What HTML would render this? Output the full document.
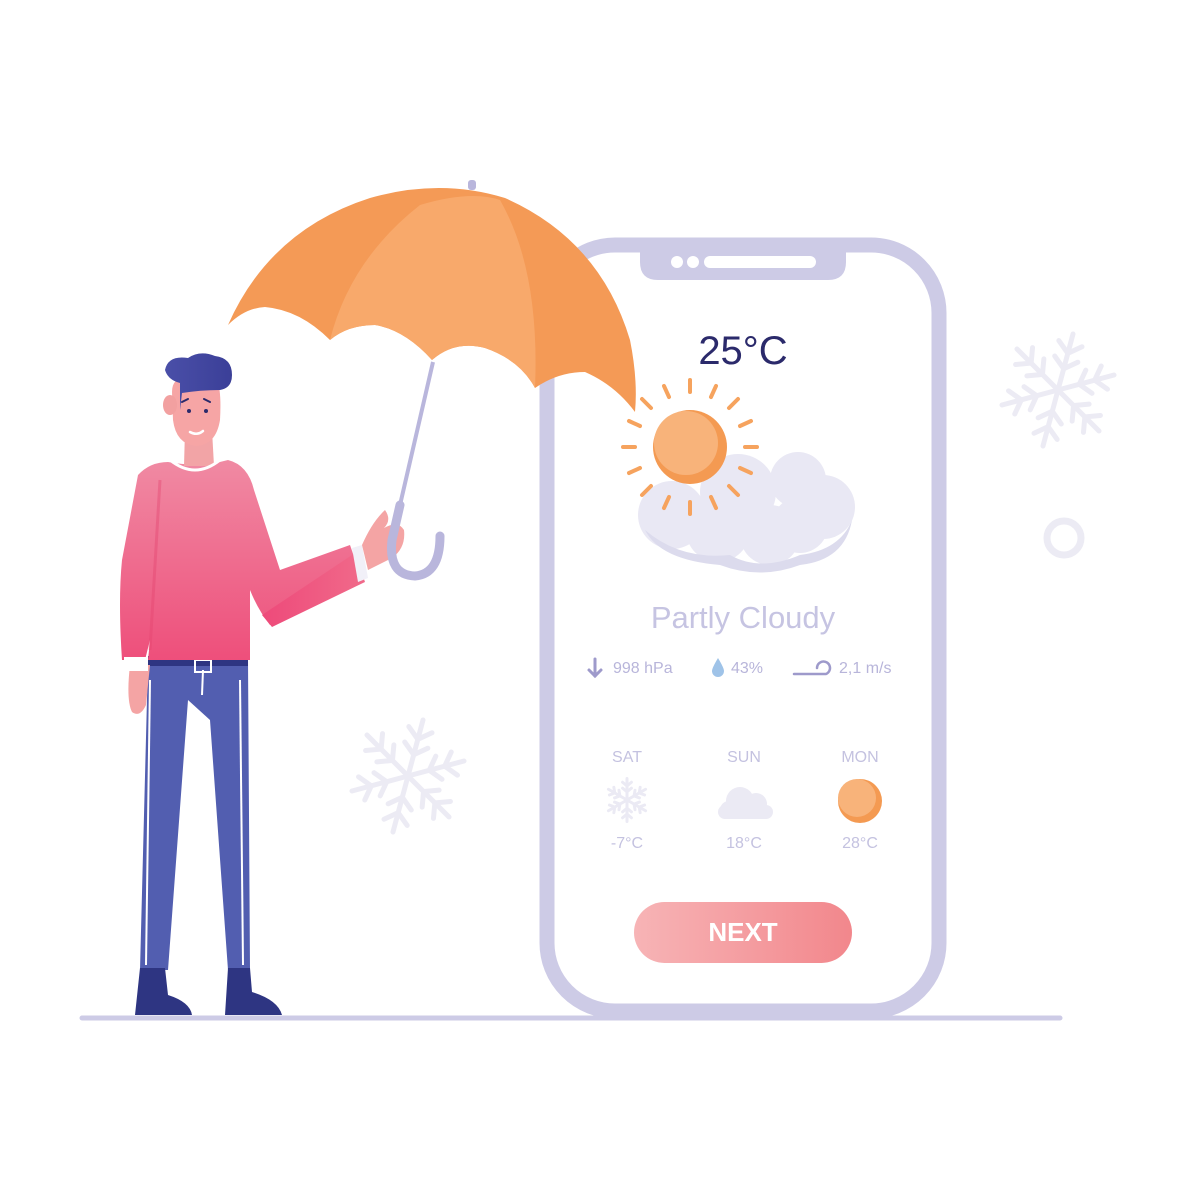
<!DOCTYPE html>
<html><head><meta charset="utf-8"><style>
html,body{margin:0;padding:0;background:#fff;width:1200px;height:1200px;overflow:hidden}
svg{display:block}
text{font-family:"Liberation Sans",sans-serif}
</style></head><body>
<svg width="1200" height="1200" viewBox="0 0 1200 1200">
<defs>
<linearGradient id="sw" x1="0" y1="0" x2="0" y2="1"><stop offset="0" stop-color="#f08aa3"/><stop offset="1" stop-color="#ee4f7b"/></linearGradient>
<linearGradient id="arm" x1="0" y1="0" x2="1" y2="0"><stop offset="0" stop-color="#ee4a7a"/><stop offset="1" stop-color="#f06a8a"/></linearGradient>
<linearGradient id="btn" x1="0" y1="0" x2="1" y2="0"><stop offset="0" stop-color="#f7b4b6"/><stop offset="1" stop-color="#f2878c"/></linearGradient>
<linearGradient id="hair" x1="0" y1="0" x2="1" y2="0"><stop offset="0" stop-color="#4a4fa8"/><stop offset="1" stop-color="#3b3f98"/></linearGradient>
<g id="flake" fill="none" stroke-linecap="round">
<g id="arm1"><line x1="0" y1="0" x2="0" y2="-58"/><polyline points="-12,-32 0,-22 12,-32"/><polyline points="-12,-48 0,-38 12,-48"/></g>
<use href="#arm1" transform="rotate(60)"/><use href="#arm1" transform="rotate(120)"/><use href="#arm1" transform="rotate(180)"/><use href="#arm1" transform="rotate(240)"/><use href="#arm1" transform="rotate(300)"/>
</g>
</defs>

<line x1="82" y1="1018" x2="1060" y2="1018" stroke="#cdcbe6" stroke-width="5" stroke-linecap="round"/>

<g transform="translate(1058,390) rotate(15)" stroke="#ecebf4" stroke-width="5"><use href="#flake"/></g>
<g transform="translate(408,776) rotate(15)" stroke="#ecebf4" stroke-width="5"><use href="#flake"/></g>
<circle cx="1064" cy="538" r="17" fill="none" stroke="#ecebf4" stroke-width="7"/>

<rect x="547" y="245" width="392" height="766" rx="68" fill="#fff" stroke="#cdcbe6" stroke-width="15"/>
<path d="M640 246 H846 V262 Q846 280 828 280 H658 Q640 280 640 262 Z" fill="#cdcbe6"/>
<circle cx="677" cy="262" r="6" fill="#fff"/><circle cx="693" cy="262" r="6" fill="#fff"/>
<rect x="704" y="256" width="112" height="12" rx="6" fill="#fff"/>

<text x="743" y="364" text-anchor="middle" font-size="40" fill="#2b2a6b">25°C</text>

<!-- cloud -->
<g fill="#e9e8f4">
<circle cx="672" cy="515" r="34"/><circle cx="738" cy="492" r="38"/><circle cx="798" cy="480" r="28"/><circle cx="823" cy="507" r="32"/><circle cx="718" cy="530" r="32"/><circle cx="770" cy="535" r="30"/><circle cx="800" cy="525" r="28"/>
</g>
<path d="M645 530 Q680 560 730 555 Q760 572 800 555 Q840 550 852 520 Q845 560 800 565 Q760 580 720 565 Q660 560 645 530Z" fill="#dcdbed"/>
<!-- sun -->
<g stroke="#f6a35e" stroke-width="4" stroke-linecap="round">
<line x1="690" y1="392" x2="690" y2="380"/><line x1="690" y1="502" x2="690" y2="514"/>
<line x1="635" y1="447" x2="623" y2="447"/><line x1="745" y1="447" x2="757" y2="447"/>
<line x1="651" y1="408" x2="642" y2="399"/><line x1="729" y1="408" x2="738" y2="399"/>
<line x1="651" y1="486" x2="642" y2="495"/><line x1="729" y1="486" x2="738" y2="495"/>
<line x1="669" y1="397" x2="664" y2="386"/><line x1="711" y1="397" x2="716" y2="386"/>
<line x1="669" y1="497" x2="664" y2="508"/><line x1="711" y1="497" x2="716" y2="508"/>
<line x1="640" y1="426" x2="629" y2="421"/><line x1="740" y1="426" x2="751" y2="421"/>
<line x1="640" y1="468" x2="629" y2="473"/><line x1="740" y1="468" x2="751" y2="473"/>
</g>
<circle cx="690" cy="447" r="37" fill="#f49a52"/>
<circle cx="686" cy="443" r="32" fill="#f8b37a"/>

<text x="743" y="628" text-anchor="middle" font-size="31" fill="#c6c4e2">Partly Cloudy</text>

<g stroke="#9e9acb" stroke-width="3" fill="none" stroke-linecap="round"><line x1="595" y1="659" x2="595" y2="676"/><polyline points="589,670 595,676 601,670"/></g>
<text x="613" y="673" font-size="16" fill="#b8b5da">998 hPa</text>
<path d="M718 658 Q712 668 712 671 A6 6 0 0 0 724 671 Q724 668 718 658Z" fill="#9fc3e8"/>
<text x="731" y="673" font-size="16" fill="#b8b5da">43%</text>
<path d="M794 674 H826 A6.5 6.5 0 1 0 817 668" fill="none" stroke="#9e9acb" stroke-width="2.5" stroke-linecap="round"/>
<text x="839" y="673" font-size="16" fill="#b8b5da">2,1 m/s</text>

<g font-size="16" fill="#c4c2e0" text-anchor="middle">
<text x="627" y="762">SAT</text><text x="744" y="762">SUN</text><text x="860" y="762">MON</text>
<text x="627" y="848">-7°C</text><text x="744" y="848">18°C</text><text x="860" y="848">28°C</text>
</g>
<g transform="translate(627,800) scale(0.37)" stroke="#ebeaf4" stroke-width="8"><use href="#flake"/></g>
<g fill="#ebeaf4"><circle cx="740" cy="801" r="14"/><circle cx="756" cy="804" r="11"/><circle cx="729" cy="810" r="9"/><rect x="718" y="805" width="55" height="14" rx="7"/></g>
<circle cx="860" cy="801" r="22" fill="#f49a52"/><circle cx="857" cy="798" r="19" fill="#f8b37a"/>

<rect x="634" y="902" width="218" height="61" rx="30.5" fill="url(#btn)"/>
<text x="743" y="941" text-anchor="middle" font-size="26" font-weight="bold" fill="#fff">NEXT</text>

<!-- umbrella -->
<path d="M228 325 Q270 230 370 198 Q440 178 505 198 Q600 240 630 340 Q638 380 635 412 Q615 385 585 372 Q558 372 535 388 Q520 360 485 348 Q455 340 432 360 Q405 330 375 325 Q348 325 330 340 Q300 310 265 307 Q245 308 228 325Z" fill="#f49a56"/>
<path d="M330 340 Q350 260 420 205 Q470 190 500 200 Q540 270 535 388 Q520 360 485 348 Q455 340 432 360 Q405 330 375 325 Q348 325 330 340Z" fill="#f8a96b"/>
<rect x="468" y="180" width="8" height="10" rx="3" fill="#b9b6dc"/>
<path d="M433 362 L400 505" stroke="#b9b6dc" stroke-width="4" fill="none"/>

<!-- man -->
<path d="M148 660 L248 660 L250 970 L228 970 L210 720 L188 700 L168 970 L140 970 Z" fill="#525eb0"/>
<line x1="150" y1="680" x2="146" y2="965" stroke="#fff" stroke-width="2"/>
<line x1="240" y1="680" x2="243" y2="965" stroke="#fff" stroke-width="2"/>
<line x1="203" y1="670" x2="202" y2="695" stroke="#fff" stroke-width="2"/>
<rect x="148" y="656" width="100" height="10" fill="#2e3582"/>
<rect x="195" y="660" width="16" height="12" fill="none" stroke="#fff" stroke-width="2"/>
<path d="M140 968 L165 968 L168 995 Q190 1002 192 1015 L135 1015 Z" fill="#2e3582"/>
<path d="M228 968 L250 968 L252 992 Q278 1000 282 1015 L225 1015 Z" fill="#2e3582"/>
<path d="M130 665 Q126 700 132 712 Q140 718 146 705 L150 665Z" fill="#f4a4a4"/>
<path d="M168 462 Q200 468 228 460 Q248 465 254 490 L280 570 L350 545 L362 580 L270 625 Q258 610 250 590 L250 660 L148 660 L150 640 L145 660 L122 660 Q118 600 122 560 L138 475 Q150 462 168 462Z" fill="url(#sw)"/>
<path d="M160 480 L150 650" stroke="#e4446f" stroke-width="3" fill="none" opacity=".4"/>
<path d="M262 615 L355 553 L365 582 L272 627Z" fill="url(#arm)"/>
<rect x="124" y="657" width="24" height="14" fill="#fff"/>
<path d="M352 548 L362 545 L368 578 L358 582Z" fill="#f1f0f8"/>
<path d="M362 545 Q372 522 385 510 Q392 520 384 528 Q398 520 404 530 Q406 548 392 558 L368 570Z" fill="#f4a4a4"/>
<path d="M400 505 L392 540 Q388 575 415 576 Q440 574 440 536" stroke="#b9b6dc" stroke-width="9" fill="none" stroke-linecap="round"/>
<path d="M185 430 L212 430 L214 466 L184 466Z" fill="#f2a4a6"/>
<path d="M170 460 Q195 480 220 460" stroke="#fff" stroke-width="3" fill="none"/>
<path d="M172 392 Q172 380 182 378 L215 378 Q222 385 220 420 Q216 445 196 446 Q176 444 173 420Z" fill="#f6a5a5"/>
<ellipse cx="170" cy="405" rx="7" ry="10" fill="#f2a0a0"/>
<path d="M180 383 Q168 380 165 370 Q168 355 188 358 Q200 350 215 356 Q232 358 232 375 Q232 388 220 390 Q200 390 182 393 L180 410 Z" fill="url(#hair)"/>
<path d="M182 402 L188 399 M204 399 L210 402" stroke="#2b2a6b" stroke-width="2" stroke-linecap="round"/>
<circle cx="189" cy="411" r="2" fill="#2b2a6b"/><circle cx="206" cy="411" r="2" fill="#2b2a6b"/>
<path d="M190 432 Q197 436 203 431" stroke="#fff" stroke-width="2.5" fill="none" stroke-linecap="round"/>
</svg>
</body></html>
